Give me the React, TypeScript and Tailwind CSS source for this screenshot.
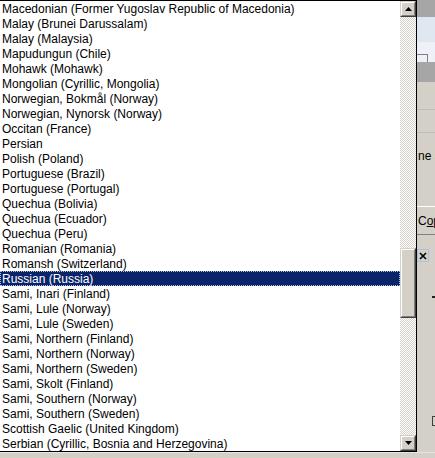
import React from "react";

const LANGUAGES = [
  "Macedonian (Former Yugoslav Republic of Macedonia)",
  "Malay (Brunei Darussalam)",
  "Malay (Malaysia)",
  "Mapudungun (Chile)",
  "Mohawk (Mohawk)",
  "Mongolian (Cyrillic, Mongolia)",
  "Norwegian, Bokmål (Norway)",
  "Norwegian, Nynorsk (Norway)",
  "Occitan (France)",
  "Persian",
  "Polish (Poland)",
  "Portuguese (Brazil)",
  "Portuguese (Portugal)",
  "Quechua (Bolivia)",
  "Quechua (Ecuador)",
  "Quechua (Peru)",
  "Romanian (Romania)",
  "Romansh (Switzerland)",
  "Russian (Russia)",
  "Sami, Inari (Finland)",
  "Sami, Lule (Norway)",
  "Sami, Lule (Sweden)",
  "Sami, Northern (Finland)",
  "Sami, Northern (Norway)",
  "Sami, Northern (Sweden)",
  "Sami, Skolt (Finland)",
  "Sami, Southern (Norway)",
  "Sami, Southern (Sweden)",
  "Scottish Gaelic (United Kingdom)",
  "Serbian (Cyrillic, Bosnia and Herzegovina)",
];

const SELECTED = "Russian (Russia)";

function Bevel({ className, children }: { className: string; children?: React.ReactNode }) {
  return (
    <div
      className={`bg-[#d4d0c8] border border-t-[#d4d0c8] border-l-[#d4d0c8] border-b-[#404040] border-r-[#404040] ${className}`}
    >
      <div className="w-full h-full border border-t-white border-l-white border-b-[#808080] border-r-[#808080] flex items-center justify-center">
        {children}
      </div>
    </div>
  );
}

function Arrow({ down }: { down?: boolean }) {
  return (
    <svg width="7" height="4" viewBox="0 0 7 4" className="block">
      {down ? <path d="M0 0h7L3.5 4z" fill="#000" /> : <path d="M3.5 0L7 4H0z" fill="#000" />}
    </svg>
  );
}

const track =
  "bg-[repeating-conic-gradient(#d4d0c8_0_25%,#ffffff_0_50%)] bg-[length:2px_2px]";

export default function App() {
  return (
    <div
      className="w-[435px] h-[458px] bg-[#d4d0c8] overflow-hidden flex flex-col text-[12px] text-black"
      style={{ fontFamily: '"Liberation Sans", Arial, sans-serif' }}
    >
      <div className="flex h-[452px]">
        {/* drop-down list */}
        <div className="w-[417px] h-[452px] bg-white border-t border-r border-b border-black flex">
          <div className="w-[400px] flex flex-col">
            {LANGUAGES.map((name) => {
              const sel = name === SELECTED;
              return (
                <div
                  key={name}
                  className={`h-[15px] leading-[16px] pl-[2px] whitespace-nowrap overflow-hidden ${
                    sel
                      ? "bg-[#0a246a] text-white outline-1 outline-dotted outline-[#b8c2dc] -outline-offset-1"
                      : ""
                  }`}
                >
                  {name}
                </div>
              );
            })}
          </div>
          {/* scroll bar */}
          <div className="w-[16px] flex flex-col">
            <Bevel className="h-[16px]">
              <Arrow />
            </Bevel>
            <div className={`h-[231px] ${track}`} />
            <Bevel className="h-[70px]" />
            <div className={`h-[117px] ${track}`} />
            <Bevel className="h-[16px]">
              <Arrow down />
            </Bevel>
          </div>
        </div>

        {/* dialog behind the list */}
        <div className="flex-1 flex flex-col overflow-hidden">
          <div className="h-[17px] bg-[#a6a6a6]" />
          <div className="h-[25px] bg-[#dfe7f1]" />
          <div className="h-[12px] bg-[#eef2f8]" />
          <div className="h-[8px] bg-[#eef2f8]">
            <div className="w-[11px] h-full border-t border-r border-[#808080]" />
          </div>
          <div className="h-[20px] bg-[#a6a6a6]" />
          <div className="h-[28px] border-b border-[#c0bdb4]" />
          <div className="h-[23px] border-b border-[#c0bdb4]" />
          <div className="h-[15px]" />
          <div className="h-[15px] leading-[16px] whitespace-nowrap pl-[1px]">ne s</div>
          <div className="h-[43px]" />
          <div className="h-[29px] border-t border-white border-b border-b-[#808080] flex items-center whitespace-nowrap pl-[1px]">
            C<span className="underline">o</span>p
          </div>
          <div className="h-[14px]" />
          <div className="h-[13px] flex">
            <div className="w-[12px] h-[13px] border border-[#a9c3e3] bg-[#d4d0c8] flex items-center justify-center">
              <svg width="8" height="8" viewBox="0 0 8 8">
                <path d="M1 1l6 6M7 1L1 7" stroke="#000" strokeWidth="1.6" />
              </svg>
            </div>
          </div>
          <div className="h-[34px]" />
          <div className="h-[2px] flex justify-end">
            <div className="w-[3px] h-[2px] bg-[#202020]" />
          </div>
          <div className="h-[118px]" />
          <div className="h-[10px] flex justify-end">
            <div className="w-[3px] h-full border-t border-l border-b border-[#404040]" />
          </div>
        </div>
      </div>
      <div className="h-[6px] border-t border-[#e8e6e0] bg-[#d4d0c8]" />
    </div>
  );
}
